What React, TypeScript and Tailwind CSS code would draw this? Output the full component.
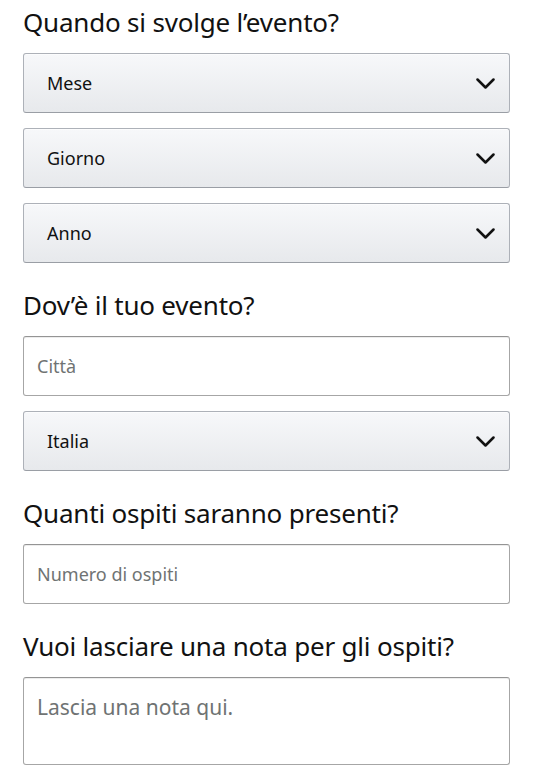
const FONT = "font-['Noto_Sans',_'Open_Sans',_sans-serif]";

function Heading({ children }: { children: string }) {
  return (
    <h2 className="text-[26px] leading-[32px] text-[#111111] tracking-[-0.2px]">
      {children}
    </h2>
  );
}

function Select({ label }: { label: string }) {
  return (
    <div className="flex h-[60px] items-center justify-between rounded-[3px] border border-[#adb1b8] border-b-[#9a9ea5] bg-gradient-to-b from-[#f7f8fa] to-[#e7e9ec] pl-[23px] pr-[14px] shadow-[0_1px_0_rgba(255,255,255,0.6)_inset]">
      <span className="text-[18px] text-[#111111]">{label}</span>
      <svg width="19" height="11" viewBox="0 0 19 11" fill="none">
        <polyline
          points="1.5,1.5 9.5,9.5 17.5,1.5"
          stroke="#111111"
          strokeWidth="2.5"
          strokeLinecap="round"
          strokeLinejoin="round"
        />
      </svg>
    </div>
  );
}

function Input({ placeholder }: { placeholder: string }) {
  return (
    <div className="flex h-[60px] items-center rounded-[3px] border border-[#a6a6a6] border-t-[#949494] bg-white pl-[13px] shadow-[0_1px_0_rgba(0,0,0,0.07)_inset]">
      <span className="text-[18px] text-[#6f7373]">{placeholder}</span>
    </div>
  );
}

export default function App() {
  return (
    <div className={`${FONT} min-h-[771px] w-[536px] bg-white pt-[6px]`}>
      <div className="ml-[23px] w-[487px]">
        <Heading>Quando si svolge l’evento?</Heading>
        <div className="mt-[15px] flex flex-col gap-[15px]">
          <Select label="Mese" />
          <Select label="Giorno" />
          <Select label="Anno" />
        </div>

        <div className="mt-[26px]">
          <Heading>Dov’è il tuo evento?</Heading>
        </div>
        <div className="mt-[15px] flex flex-col gap-[15px]">
          <Input placeholder="Città" />
          <Select label="Italia" />
        </div>

        <div className="mt-[26px]">
          <Heading>Quanti ospiti saranno presenti?</Heading>
        </div>
        <div className="mt-[15px]">
          <Input placeholder="Numero di ospiti" />
        </div>

        <div className="mt-[26px]">
          <Heading>Vuoi lasciare una nota per gli ospiti?</Heading>
        </div>
        <div className="mt-[15px] h-[88px] rounded-[3px] border border-[#a6a6a6] border-t-[#949494] bg-white pl-[13px] pt-[14px] shadow-[0_1px_0_rgba(0,0,0,0.07)_inset]">
          <span className="text-[21px] text-[#6f7373]">Lascia una nota qui.</span>
        </div>
      </div>
    </div>
  );
}
